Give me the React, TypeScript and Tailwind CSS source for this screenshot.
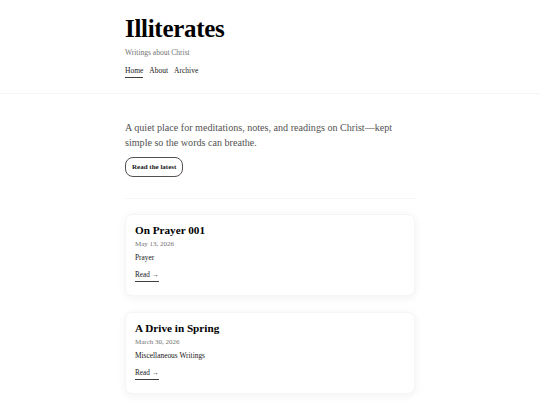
import React from 'react';

type Post = {
  title: string;
  date: string;
  category: string;
};

const posts: Post[] = [
  { title: 'On Prayer 001', date: 'May 13, 2026', category: 'Prayer' },
  { title: 'A Drive in Spring', date: 'March 30, 2026', category: 'Miscellaneous Writings' },
];

function PostCard({ post }: { post: Post }) {
  return (
    <article className="rounded-[7px] border border-neutral-100 bg-white px-[9px] pt-[7px] pb-[13px] shadow-[0_2px_10px_rgba(0,0,0,0.06)]">
      <h2 className="text-[11.2px] leading-[16px] font-bold text-black">{post.title}</h2>
      <p className="text-[7px] leading-[12px] text-neutral-500">{post.date}</p>
      <p className="mt-[2px] text-[7.4px] leading-[12px] text-neutral-900">{post.category}</p>
      <a className="mt-[6px] block w-fit border-b border-neutral-700 text-[7.2px] leading-[11px] text-neutral-900">
        Read →
      </a>
    </article>
  );
}

export default function App() {
  return (
    <div className="min-h-screen bg-white font-['Liberation_Serif',serif] text-neutral-900">
      <header className="border-b border-neutral-100">
        <div className="mx-auto w-[290px] pt-[14px] pb-[15px]">
          <h1 className="text-[25px] leading-[30px] font-bold tracking-[-0.3px] text-black">Illiterates</h1>
          <p className="mt-[3px] text-[7.5px] leading-[12px] text-neutral-500">Writings about Christ</p>
          <nav className="mt-[6px] flex gap-[6px] text-[7.5px] leading-[12px]">
            <a className="border-b border-neutral-700">Home</a>
            <a>About</a>
            <a>Archive</a>
          </nav>
        </div>
      </header>

      <main className="mx-auto w-[290px] pt-[26px]">
        <section className="border-b border-neutral-100 pb-[21px]">
          <p className="text-[10.1px] leading-[15px] text-neutral-600">
            A quiet place for meditations, notes, and readings on Christ—kept simple so the words can breathe.
          </p>
          <button className="mt-[7px] rounded-[8px] border border-neutral-600 px-[6px] py-[4px] text-[7px] leading-[10px] font-bold text-neutral-900">
            Read the latest
          </button>
        </section>

        <div className="flex flex-col gap-[16px] pt-[15px] pb-[16px]">
          {posts.map((post) => (
            <PostCard key={post.title} post={post} />
          ))}
        </div>
      </main>
    </div>
  );
}
